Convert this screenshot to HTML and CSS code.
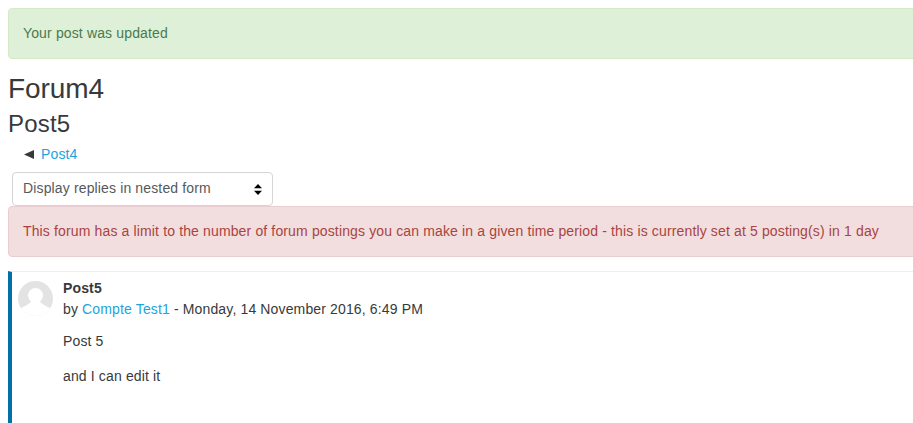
FILE: index.html
```html
<!DOCTYPE html>
<html lang="en">
<head>
    <meta charset="UTF-8">
    <title>Post5</title>
    <link rel="stylesheet" href="styles.css">
</head>
<body>

    <div class="container">
        <div class="alert alert-success">Your post was updated</div>
        <h2>Forum4</h2>
        <h3>Post5</h3>
        <div class="prev-link">
            <svg class="arrow" width="10" height="9" viewBox="0 0 10 9">
                <path d="M0 4.500L10 0V9z"/>
            </svg>
            <a href="#">Post4</a>
        </div>
        <div class="display-mode">
            <div class="select-box">
                <span>Display replies in nested form</span>
                <svg class="select-arrows" width="8" height="11" viewBox="0 0 8 11">
                    <path d="M4 0L8 4.200H0zM4 11L0 6.800H8z"/>
                </svg>
            </div>
        </div>
        <div class="alert alert-danger">This forum has a limit to the number of forum postings you can make in a given time period - this is currently set at 5 posting(s) in 1 day</div>

        <div class="post">
            <svg class="avatar" width="35" height="35" viewBox="0 0 35 35">
                <defs>
                    <clipPath id="avatarClip"><circle cx="17.500" cy="17.500" r="17.500"/></clipPath>
                </defs>
                <g clip-path="url(#avatarClip)">
                    <rect width="35" height="35" fill="#e3e3e3"/>
                    <circle cx="17.500" cy="14.500" r="7.500" fill="#fff"/>
                    <path d="M0 35V29C5 25 12 24 13 20H22C23 24 30 25 35 29V35z" fill="#fff"/>
                </g>
            </svg>
            <div class="post-body">
                <div class="post-subject">Post5</div>
                <div class="post-author">by <a href="#">Compte Test1</a> - Monday, 14 November 2016, 6:49 PM</div>
                <p>Post 5</p>
                <p>and I can edit it</p>
            </div>
        </div>
    </div>

</body>
</html>
```

FILE: styles.css
```css
html, body {
    overflow: hidden;
}
body {
    margin: 0;
    height: 423px;
    font-family: "Liberation Sans", Arial, sans-serif;
    font-size: 14px;
    line-height: 20px;
    letter-spacing: 0.14px;
    color: #373a3c;
    background-color: #fff;
}
a {
    color: #1ca4dc;
    text-decoration: none;
}
.container {
    width: 960px;
    padding: 8px 0 0 8px;
}
.alert {
    padding: 15px 14px;
    border: 1px solid;
    border-radius: 4px;
    line-height: 19px;
}
.alert-success {
    color: #4a7a4b;
    background-color: #dff0d8;
    border-color: #d6e9c6;
}
.alert-danger {
    color: #a94442;
    background-color: #f2dede;
    border-color: #ebccd1;
}
h2 {
    margin: 15px 0 0;
    font-size: 28px;
    font-weight: normal;
    line-height: 30px;
    letter-spacing: -0.1px;
}
h3 {
    margin: 5px 0 0;
    font-size: 24px;
    font-weight: normal;
    line-height: 30px;
    letter-spacing: 0.2px;
}
.prev-link {
    display: flex;
    align-items: center;
    gap: 7px;
    margin: 5px 0 0 16px;
}
.arrow {
    fill: #373a3c;
}
/* Select is drawn by hand so the arrows match */
.display-mode {
    margin: 8px 0 0 4px;
}
.select-box {
    display: flex;
    align-items: center;
    justify-content: space-between;
    box-sizing: border-box;
    width: 261px;
    height: 34px;
    padding: 0 10px;
    border: 1px solid #d5d5d5;
    border-radius: 4px;
    color: #55595c;
    background-color: #fff;
}
.select-box span {
    margin-top: -3px;
}
.post {
    display: flex;
    margin-top: 14px;
    height: 152px;
    border-top: 1px solid #eee;
    border-left: 4px solid #0070a8;
}
.avatar {
    flex: none;
    margin: 9px 0 0 6px;
}
.post-body {
    margin: 6px 0 0 10px;
}
.post-subject {
    font-weight: bold;
}
.post-author {
    margin-top: 1px;
}
.post-body p {
    margin: 12px 0 0;
}
.post-body p + p {
    margin-top: 15px;
}
```
